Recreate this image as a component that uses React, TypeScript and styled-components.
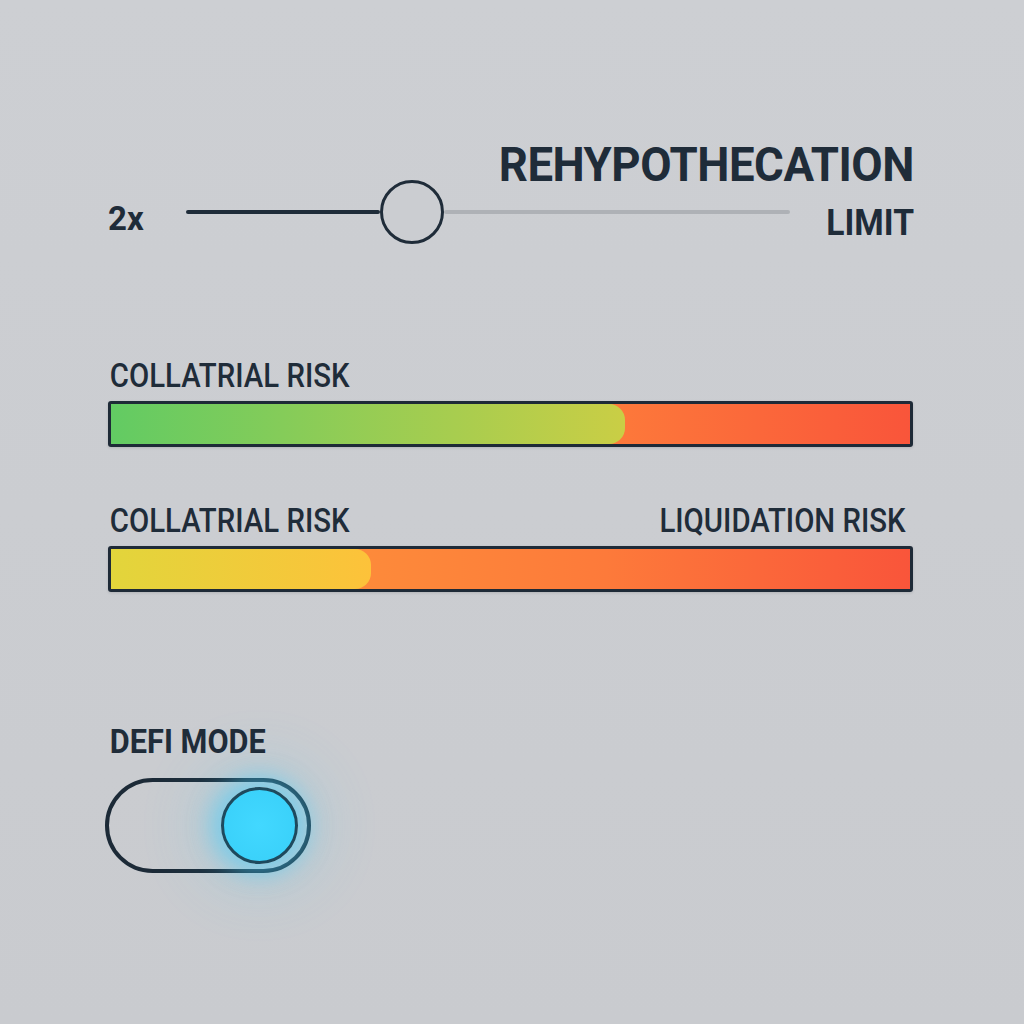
import React from "react";
import styled, { createGlobalStyle } from "styled-components";

const Global = createGlobalStyle`
  html, body { margin: 0; padding: 0; }
  body { background: #caccd0; font-family: Roboto, "Noto Sans", Arial, sans-serif; }
  #root { width: 1024px; height: 1024px; }
`;

const Page = styled.div`
  width: 1024px;
  height: 1024px;
  box-sizing: border-box;
  padding: 138px 110px 0 108px;
  background: linear-gradient(180deg, #cdcfd3 0%, #c9cbcf 100%);
  color: #1f2c39;
  display: flex;
  flex-direction: column;
`;

const TitleRow = styled.div`
  display: flex;
  justify-content: flex-end;
  height: 54px;
`;

const Title = styled.div`
  font-size: 48px;
  font-weight: 700;
  line-height: 54px;
  letter-spacing: -0.5px;
  transform: scaleX(0.948);
  transform-origin: right center;
  white-space: nowrap;
`;

const SliderRow = styled.div`
  display: flex;
  align-items: center;
  height: 64px;
  margin-top: -12px;
`;

const Value = styled.div`
  font-size: 34px;
  font-weight: 700;
  width: 78px;
  transform: scaleX(0.97);
  transform-origin: left center;
  margin-top: 12px;
`;

const Track = styled.div`
  width: 604px;
  height: 4px;
  display: flex;
  align-items: center;
`;

const TrackDone = styled.div`
  height: 4px;
  background: #1f2c39;
  border-radius: 2px;
`;

const TrackRest = styled.div`
  flex: 1;
  height: 4px;
  background: #aeb1b6;
  border-radius: 2px;
`;

const Knob = styled.div`
  width: 58px;
  height: 58px;
  border: 3.5px solid #1f2c39;
  border-radius: 50%;
  background: #cbcdd1;
  flex: none;
`;

const Limit = styled.div`
  flex: 1;
  text-align: right;
  font-size: 36px;
  font-weight: 700;
  transform: scaleX(0.935);
  transform-origin: right center;
  margin-top: 22px;
`;

const RiskBlock = styled.div<{ $top: number }>`
  margin-top: ${(p) => p.$top}px;
  display: flex;
  flex-direction: column;
`;

const LabelRow = styled.div`
  display: flex;
  justify-content: space-between;
  height: 36px;
  padding-right: 8px;
`;

const Label = styled.div<{ $align?: string }>`
  font-size: 33px;
  font-weight: 500;
  line-height: 36px;
  transform: scaleX(0.89);
  transform-origin: ${(p) => p.$align || "left"} center;
  white-space: nowrap;
  padding-left: 2px;
`;

const Bar = styled.div`
  margin-top: 7px;
  height: 46px;
  width: 805px;
  box-sizing: border-box;
  border: 3px solid #1e2a37;
  border-radius: 3px;
  overflow: hidden;
  display: flex;
  background: linear-gradient(90deg, #fd9a3a 0%, #fd863a 40%, #fd7a3a 62%, #f9553a 100%);
  box-shadow: 0 1px 3px rgba(0, 0, 0, 0.12);
`;

const Fill = styled.div<{ $from: string; $to: string }>`
  height: 100%;
  background: linear-gradient(90deg, ${(p) => p.$from}, ${(p) => p.$to});
  border-radius: 0 16px 16px 0;
`;

const ModeBlock = styled.div`
  margin-top: 132px;
  display: flex;
  flex-direction: column;
`;

const ModeLabel = styled.div`
  font-size: 33px;
  font-weight: 700;
  line-height: 36px;
  transform: scaleX(0.93);
  transform-origin: left center;
  padding-left: 2px;
`;

const Toggle = styled.div`
  margin-top: 18px;
  margin-left: -3px;
  width: 206px;
  height: 95px;
  box-sizing: border-box;
  border: 4px solid #1c2a37;
  border-radius: 48px;
  display: flex;
  align-items: center;
  justify-content: flex-end;
  padding-right: 9px;
`;

const ToggleKnob = styled.div`
  width: 77px;
  height: 77px;
  box-sizing: border-box;
  border-radius: 50%;
  border: 3.5px solid #1d4a5e;
  background: radial-gradient(circle at 50% 50%, #42d8ff 0%, #38cff8 100%);
  box-shadow: 0 0 22px 10px rgba(70, 205, 250, 0.5), 0 0 60px 24px rgba(70, 205, 250, 0.2);
`;

export default function App() {
  const pos = 226;
  return (
    <>
      <Global />
      <Page>
        <TitleRow>
          <Title>REHYPOTHECATION</Title>
        </TitleRow>
        <SliderRow>
          <Value>2x</Value>
          <Track>
            <TrackDone style={{ width: pos - 32 }} />
            <Knob />
            <TrackRest />
          </Track>
          <Limit>LIMIT</Limit>
        </SliderRow>
        <RiskBlock $top={114}>
          <LabelRow>
            <Label>COLLATRIAL RISK</Label>
          </LabelRow>
          <Bar>
            <Fill $from="#62cb63" $to="#cace45" style={{ width: "64.3%" }} />
          </Bar>
        </RiskBlock>
        <RiskBlock $top={56}>
          <LabelRow>
            <Label>COLLATRIAL RISK</Label>
            <Label $align="right">LIQUIDATION RISK</Label>
          </LabelRow>
          <Bar>
            <Fill $from="#e2d53b" $to="#fdc23a" style={{ width: "32.6%" }} />
          </Bar>
        </RiskBlock>
        <ModeBlock>
          <ModeLabel>DEFI MODE</ModeLabel>
          <Toggle>
            <ToggleKnob />
          </Toggle>
        </ModeBlock>
      </Page>
    </>
  );
}
